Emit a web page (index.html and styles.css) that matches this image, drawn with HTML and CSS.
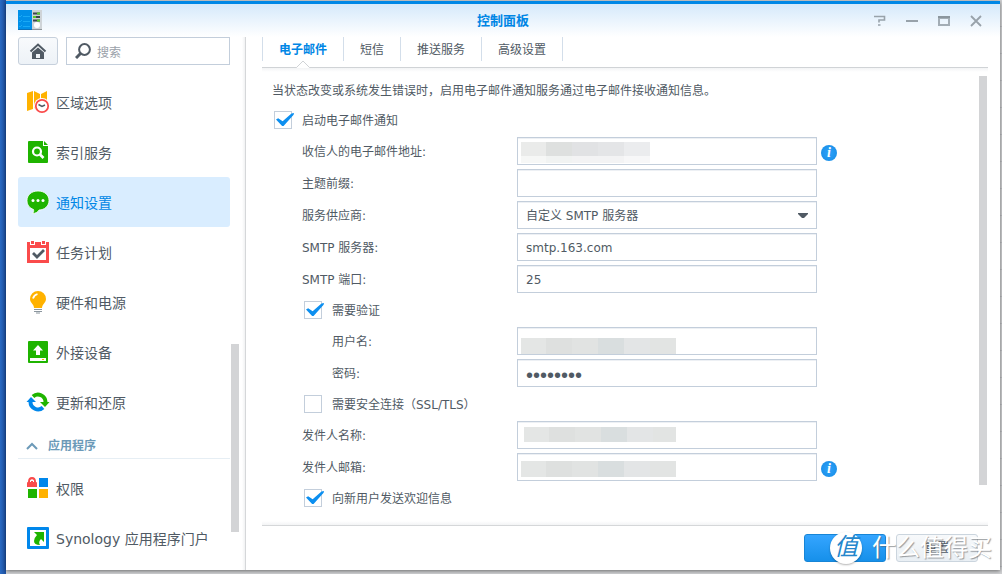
FILE: index.html
```html
<!DOCTYPE html>
<html lang="zh-CN">
<head>
<meta charset="utf-8">
<title>控制面板</title>
<link rel="stylesheet" href="styles.css">
</head>
<body>
<div class="window">
  <header class="titlebar">
    <svg class="app-icon" width="24" height="22" viewBox="0 0 24 22" aria-hidden="true">
      <rect x="13" y="0" width="11" height="20" fill="#cfd4d8"/><rect x="13" y="19" width="11" height="1" fill="#8d959b"/>
      <rect x="0" y="0" width="14" height="20" fill="#008fe8"/><rect x="0" y="19" width="14" height="1" fill="#0b72bb"/>
      <path d="M1 6l1 1 2-2M1 11l1 1 2-2M1 16l1 1 2-2M5 6.500h7M5 11.500h7M5 16.500h7" stroke="#19a9f5" fill="none"/>
      <path d="M15 3.500h7M15 7h7M15 10.500h7" stroke="#3d454c" stroke-width="2"/>
      <path d="M19 3.500h3M15 7h3M19 10.500h3" stroke="#5bc92e" stroke-width="2"/>
      <circle cx="19" cy="15" r="3" fill="#fff"/>
    </svg>
    <h1 class="title">控制面板</h1>
    <div class="window-tools">
      <button class="tool" type="button" aria-label="帮助"><svg width="12" height="12" viewBox="0 0 12 12"><path d="M0 1.500h10.500v3.500H5v2.500M4 10h2.500" fill="none" stroke="#98a2aa" stroke-width="1.600"/></svg></button>
      <button class="tool" type="button" aria-label="最小化"><svg width="12" height="12" viewBox="0 0 12 12"><path d="M0 6h12" stroke="#98a2aa" stroke-width="2"/></svg></button>
      <button class="tool" type="button" aria-label="最大化"><svg width="12" height="12" viewBox="0 0 12 12"><path d="M0 1h12v10H0zM2 4v5h8V4z" fill="#a3adb5" fill-rule="evenodd"/><path d="M0 1h12v2H0z" fill="#8b969e"/></svg></button>
      <button class="tool" type="button" aria-label="关闭"><svg width="12" height="12" viewBox="0 0 12 12"><path d="M1 1l10 10M11 1L1 11" stroke="#98a2aa" stroke-width="1.800"/></svg></button>
    </div>
  </header>

  <div class="body">
    <aside class="sidebar">
      <div class="search-row">
        <button class="home" type="button" aria-label="主页"><svg width="18" height="18" viewBox="0 0 18 18"><path d="M1.500 9.500L9 2.500l7.500 7" fill="none" stroke="#505a64" stroke-width="2"/><path d="M3 10.500L9 5.500l6 5V17H3zM7 12v4h4v-4z" fill="#505a64" fill-rule="evenodd"/></svg></button>
        <label class="search">
          <svg width="16" height="16" viewBox="0 0 16 16" aria-hidden="true"><circle cx="9.500" cy="6.500" r="5.400" fill="none" stroke="#505a64" stroke-width="2"/><path d="M5.500 10.500L1 15" stroke="#505a64" stroke-width="3"/></svg>
          <input class="search-input" type="search" placeholder="搜索" aria-label="搜索">
        </label>
      </div>
      <div class="nav-area">
        <nav class="nav">
          <a class="nav-item" href="#region"><svg class="nav-icon" viewBox="0 0 24 24"><path d="M1 3l6-2v18l-6 2zM8 1l6 3v16l-6-2zM15 4l6-3v18h-6z" fill="#ffb200"/><circle cx="16" cy="16" r="8" fill="#fff"/><circle cx="16" cy="16" r="6.200" fill="#fff" stroke="#fa4b4b" stroke-width="1.800"/><path d="M12.500 14.500l3.500 2 3-1.500" fill="none" stroke="#505a64" stroke-width="1.500"/></svg>区域选项</a>
          <a class="nav-item" href="#index"><svg class="nav-icon" viewBox="0 0 24 24"><path d="M3 1h14v5h5v16q0 1-1 1H3q-1 0-1-1V2q0-1 1-1z" fill="#1fb400"/><path d="M18 1l4 4h-4z" fill="#1fb400"/><circle cx="11" cy="11.500" r="4" fill="none" stroke="#fff" stroke-width="2.200"/><path d="M14 14.500l3.500 3.500" stroke="#fff" stroke-width="2.600"/></svg>索引服务</a>
          <a class="nav-item active" href="#notify" aria-current="page"><svg class="nav-icon" viewBox="0 0 24 24"><path d="M12 1c6.500 0 11 4 11 9.500S18.500 20 13 20c-1 2-3.500 3.500-6.500 3.500 1-1 1.500-2.500 1-4C3.500 18 1 15 1 10.500 1 5 5.500 1 12 1z" fill="#1fb400" stroke="#fff" stroke-width=".8"/><circle cx="7" cy="10.500" r="1.500" fill="#fff"/><circle cx="12" cy="10.500" r="1.500" fill="#fff"/><circle cx="17" cy="10.500" r="1.500" fill="#fff"/></svg>通知设置</a>
          <a class="nav-item" href="#task"><svg class="nav-icon" viewBox="0 0 24 24"><path d="M1 2h22v21H1z" fill="#fa4b4b"/><path d="M4 8h16v12H4zM4 0h5v5H4zM15 0h5v5h-5z" fill="#fff"/><path d="M5 1h3v3H5zM16 1h3v3h-3z" fill="#fa4b4b"/><path d="M7 13l4 4 7-7" fill="none" stroke="#505a64" stroke-width="2.800"/></svg>任务计划</a>
          <a class="nav-item" href="#power"><svg class="nav-icon" viewBox="0 0 24 24"><path d="M12 1a8 8 0 0 1 8 8c0 4-4 5-4 9H8c0-4-4-5-4-9a8 8 0 0 1 8-8z" fill="#ffb200"/><path d="M7 8.500Q8 5 11.500 4" stroke="#fff" stroke-width="1.800" fill="none"/><path d="M8 19.500h8M8 21.500h8M10 23h4" stroke="#8b969e"/></svg>硬件和电源</a>
          <a class="nav-item" href="#external"><svg class="nav-icon" viewBox="0 0 24 24"><rect x="2" y="1" width="20" height="22" rx="1" fill="#1fb400"/><path d="M12 5l5 5.500h-3V15h-4v-4.500H7zM4 18h16v3H4z" fill="#fff"/><path d="M16 19.500h2" stroke="#ffb200"/></svg>外接设备</a>
          <a class="nav-item" href="#update"><svg class="nav-icon" viewBox="0 0 24 24"><path d="M7 6.500A7.500 7.500 0 0 1 19.500 12" fill="none" stroke="#1fb400" stroke-width="4"/><path d="M14 12h9.500L19 17z" fill="#1fb400"/><path d="M17 17.500A7.500 7.500 0 0 1 4.500 12" fill="none" stroke="#0087eb" stroke-width="4"/><path d="M.5 12H10L5 7z" fill="#0087eb"/></svg>更新和还原</a>
          <h2 class="group"><svg width="12" height="8" viewBox="0 0 12 8" aria-hidden="true"><path d="M1 7l5-5 5 5" fill="none" stroke="#6c9ab8" stroke-width="2"/></svg>应用程序</h2>
          <a class="nav-item" href="#privileges"><svg class="nav-icon" viewBox="0 0 24 24"><path d="M1 11V7q0-1 1-1 0-5 4-5t4 5q1 0 1 1v4z" fill="#fa4b4b"/><path d="M4 6V4.500q2-2.500 4 0V6H7V5H5v1z" fill="#fff"/><path d="M13 2h9v9h-9z" fill="#0087eb"/><path d="M2 13h9v9H2z" fill="#1fb400"/><path d="M13 13h9v9h-9z" fill="#ffb200"/></svg>权限</a>
          <a class="nav-item" href="#portal"><svg class="nav-icon" viewBox="0 0 24 24"><rect x="1" y="1" width="22" height="22" rx="1" fill="#0087eb"/><path d="M4 4h16v16H4z" fill="#fff"/><path d="M8 6h10v10l-3-3q-3 3-1 6-6 0-6-4 0-3 3-6z" fill="#1fb400"/></svg>Synology 应用程序门户</a>
        </nav>
        <div class="track" aria-hidden="true"><div class="nav-thumb"></div></div>
      </div>
    </aside>

    <main class="main">
      <div class="tabs" role="tablist">
        <button class="tab selected" type="button" role="tab" aria-selected="true">电子邮件<svg class="notch" width="14" height="8" viewBox="0 0 14 8" aria-hidden="true"><path d="M0 8L7 1l7 7z" fill="#fff"/><path d="M0 7.500h.5L7 1l6.500 6.500h.5" fill="none" stroke="#d0d3d6"/></svg></button>
        <button class="tab" type="button" role="tab">短信</button>
        <button class="tab" type="button" role="tab">推送服务</button>
        <button class="tab" type="button" role="tab">高级设置</button>
      </div>
      <div class="content">
        <form class="form" id="mail-form">
          <p class="check-row">当状态改变或系统发生错误时，启用电子邮件通知服务通过电子邮件接收通知信息。</p>
          <label class="check-row level-1"><input class="check" type="checkbox" checked>启动电子邮件通知</label>
          <div class="field"><label class="label" for="to">收信人的电子邮件地址:</label><input class="box masked mask-to" id="to" type="text"><button class="info" type="button" aria-label="说明">i</button></div>
          <div class="field"><label class="label" for="prefix">主题前缀:</label><input class="box" id="prefix" type="text"></div>
          <div class="field"><label class="label" for="provider">服务供应商:</label><div class="select-wrap"><select class="box" id="provider"><option>自定义 SMTP 服务器</option></select><svg class="caret" width="10" height="6" viewBox="0 0 10 6" aria-hidden="true"><path d="M0 0h10v1L6 5H4L0 1z" fill="#505a64"/></svg></div></div>
          <div class="field"><label class="label" for="server">SMTP 服务器:</label><input class="box" id="server" type="text" value="smtp.163.com"></div>
          <div class="field"><label class="label" for="port">SMTP 端口:</label><input class="box" id="port" type="text" value="25"></div>
          <label class="check-row level-2"><input class="check" type="checkbox" checked>需要验证</label>
          <div class="field"><label class="label deep" for="user">用户名:</label><input class="box masked mask-user" id="user" type="text"></div>
          <div class="field"><label class="label deep" for="pass">密码:</label><input class="box password" id="pass" type="password" value="password"></div>
          <label class="check-row level-2"><input class="check" type="checkbox">需要安全连接（SSL/TLS）</label>
          <div class="field"><label class="label" for="sender">发件人名称:</label><input class="box masked mask-name" id="sender" type="text"></div>
          <div class="field"><label class="label" for="from">发件人邮箱:</label><input class="box masked mask-from" id="from" type="text"><button class="info" type="button" aria-label="说明">i</button></div>
          <label class="check-row level-2"><input class="check" type="checkbox" checked>向新用户发送欢迎信息</label>
        </form>
        <div class="track" aria-hidden="true"><div class="form-thumb"></div></div>
      </div>
      <footer class="footer">
        <button class="button primary" type="submit" form="mail-form" aria-label="应用"></button>
        <button class="button" type="reset" form="mail-form">重置</button>
        <div class="brand"><span class="brand-mark">值</span><span class="brand-name">什么值得买</span></div>
      </footer>
    </main>
  </div>
</div>
</body>
</html>
```
FILE: styles.css
```css
* { box-sizing: border-box; }

body {
  margin: 0;
  min-height: 100vh;
  display: flex;
  padding: 1px 2px 4px 6px;
  background: linear-gradient(90deg, #2a6bc4, #1c4f9f) 0 0 / 6px 100% no-repeat,
    repeating-linear-gradient(#d2d3d5 0 26px, #bfc1c4 26px 27px);
  color: #505a64;
  font: 12px/18px "DejaVu Sans", "Noto Sans CJK SC", sans-serif;
}

button, input, select { font: inherit; color: inherit; margin: 0; }
button { padding: 0; border: 0; background: none; }
h1, h2, p { margin: 0; }

.window {
  flex: 1;
  display: flex;
  flex-direction: column;
  border-top: 3px solid #0087e6;
  background: #fff;
  box-shadow: 0 1px 4px rgba(0, 0, 0, .5);
}

.titlebar {
  display: grid;
  grid-template-columns: 1fr auto 1fr;
  align-items: center;
  height: 33px;
  padding: 0 8px 0 12px;
  background: linear-gradient(#d5e9fb, #fff);
}
.title { padding-right: 4px; font-size: 13px; line-height: 18px; color: #0086e5; }
.window-tools { display: flex; justify-content: flex-end; }
.tool { display: flex; align-items: center; justify-content: center; width: 32px; height: 32px; }

.body { flex: 1; display: flex; }

.sidebar {
  flex: none;
  display: flex;
  flex-direction: column;
  width: 240px;
  padding: 0 6px 7px 12px;
  border-right: 1px solid #d5d7d9;
  background: linear-gradient(90deg, #fff, #f1f2f3) right / 3px 100% no-repeat;
}
.search-row { display: flex; gap: 8px; padding: 0 9px 12px 0; height: 40px; }
.home {
  flex: none;
  display: flex;
  align-items: center;
  justify-content: center;
  width: 40px;
  border: 1px solid #c6d0dc;
  border-radius: 3px;
  background: linear-gradient(#f8fafc, #edf2f7);
}
.search {
  flex: 1;
  min-width: 0;
  display: flex;
  align-items: center;
  gap: 6px;
  padding: 0 8px;
  border: 1px solid #c3cedb;
}
.search svg { flex: none; }
.search-input { flex: 1; min-width: 0; padding: 3px 0 0; border: 0; outline: 0; background: none; }
.search-input::placeholder { color: #9aa1a9; }

.nav-area { flex: 1; display: flex; gap: 1px; }
.nav { flex: 1; }
.nav-item {
  display: flex;
  align-items: center;
  gap: 6px;
  height: 50px;
  padding: 2px 0 0 8px;
  border-radius: 3px;
  color: #505a64;
  font-size: 14px;
  text-decoration: none;
  white-space: nowrap;
}
.nav-icon { width: 24px; height: 24px; margin-bottom: 2px; }
.active { background: #d9edff; color: #0086e5; }
.group {
  display: flex;
  align-items: center;
  gap: 10px;
  height: 32px;
  margin-bottom: 4px;
  padding: 6px 8px 0;
  border-bottom: 1px solid #e6eef4;
  color: #6c9ab8;
  font-size: 12px;
}

.track { flex: none; display: flex; flex-direction: column; width: 8px; }
.track::before, .track::after { content: ""; }
.nav-thumb, .form-thumb { background: #d3d4d6; }
.nav-area .track::before { flex: 267; }
.nav-thumb { flex: 188; }
.nav-area .track::after { flex: 31; }
.form-thumb { flex: 409; }
.content .track::after { flex: 31; }

.main { flex: 1; min-width: 0; display: flex; flex-direction: column; padding: 0 12px 8px 16px; }
.tabs { display: flex; height: 31px; padding-bottom: 6px; border-bottom: 1px solid #d0d3d6; }
.tab { position: relative; padding: 2px 16px 0; border-right: 1px solid #d3deea; }
.tab:first-child { border-left: 1px solid #d3deea; }
.selected { color: #0086e5; font-weight: bold; }
.notch { position: absolute; left: 50%; top: 100%; margin: -1px 0 0 -7px; }

.content {
  flex: 1;
  display: flex;
  padding: 8px 1px 9px 10px;
  background: linear-gradient(#f3f4f5, #fff) top / 100% 4px no-repeat,
    linear-gradient(#fff, #f3f4f5) bottom / 100% 4px no-repeat;
}
.form { flex: 1; display: flex; flex-direction: column; gap: 4px; padding-top: 1px; }
.check-row { display: flex; align-items: center; gap: 10px; height: 26px; padding-top: 2px; }
.level-1 { padding-left: 2px; }
.level-2 { padding-left: 32px; }
.check {
  appearance: none;
  width: 18px;
  height: 18px;
  margin-bottom: 2px;
  border: 1px solid #c3cedb;
  background: #fff;
  position: relative;
}
.check:checked::after {
  content: "";
  position: absolute;
  left: 1px;
  top: 1px;
  width: 18px;
  height: 13px;
  background: #0c8ff0;
  clip-path: polygon(0 50%, 12% 40%, 37% 64%, 86% 4%, 100% 0, 98% 14%, 42% 100%, 34% 100%);
}

.field { display: flex; align-items: center; height: 28px; }
.label { flex: none; width: 245px; padding: 2px 0 0 30px; }
.deep { padding-left: 60px; }
.box {
  appearance: none;
  width: 300px;
  height: 28px;
  padding: 2px 8px 0;
  border: 1px solid #c3cedb;
  border-radius: 0;
  background-color: #fff;
  box-shadow: inset 0 1px 0 #edf0f4;
  outline: 0;
}
.password { font: 20px/20px "Liberation Sans", sans-serif; padding-top: 4px; }
.select-wrap { position: relative; width: 300px; }
.caret { position: absolute; right: 9px; top: 12px; pointer-events: none; }

.masked {
  background-image:
    linear-gradient(90deg, #e4e6e5 25px, #dee0df 25px 51px, #e1e3e2 51px 77px, #d9dedf 77px 103px, #e3e5e6 103px 129px, #e2e4e3 129px);
  background-repeat: no-repeat;
  background-size: 155px 16px;
}
.mask-to {
  background-image:
    linear-gradient(90deg, #eaebea 25px, #dee0df 25px 51px, #e1e2e4 51px 77px, #e4e5e7 77px 103px, #ebecee 103px),
    linear-gradient(90deg, #f6f7f6 25px, #f1f3f2 25px 51px, #f3f3f4 51px 103px, #f7f7f8 103px);
  background-size: 129px 14px, 129px 7px;
  background-position: 3px 4px, 3px 18px;
}
.mask-user { background-position: 3px 10px; }
.mask-name { background-size: 152px 15px; background-position: 6px 5px; }
.mask-from { background-position: 3px 7px; }

.info {
  width: 16px;
  height: 16px;
  margin: 3px 0 0 4px;
  border-radius: 50%;
  background: radial-gradient(#2ea2fb, #168be3);
  color: #fff;
  font: italic bold 14px/16px "Liberation Serif", serif;
}

.footer {
  position: relative;
  display: flex;
  justify-content: flex-end;
  gap: 10px;
  padding: 8px 10px 0 0;
  border-top: 1px solid #d5d7d9;
}
.button {
  width: 82px;
  height: 28px;
  border: 1px solid #cbd5de;
  border-radius: 3px;
  background: linear-gradient(#f7f9fb, #e9eff4);
}
.primary { border-color: #1785d6; background: linear-gradient(#35a5ff, #1690ea); }
.brand {
  position: absolute;
  right: -4px;
  top: 6px;
  display: flex;
  align-items: center;
  gap: 10px;
  pointer-events: none;
}
.brand-mark {
  width: 32px;
  height: 32px;
  border-radius: 50%;
  background: #fff;
  box-shadow: 0 1px 2px rgba(0, 0, 0, .3);
  color: #2487cc;
  font-size: 24px;
  font-style: italic;
  line-height: 30px;
  text-align: center;
}
.brand-name {
  color: #fff;
  font-size: 24px;
  line-height: 32px;
  white-space: nowrap;
  text-shadow: 1px 1px 1px rgba(90, 95, 100, .6);
}
```
